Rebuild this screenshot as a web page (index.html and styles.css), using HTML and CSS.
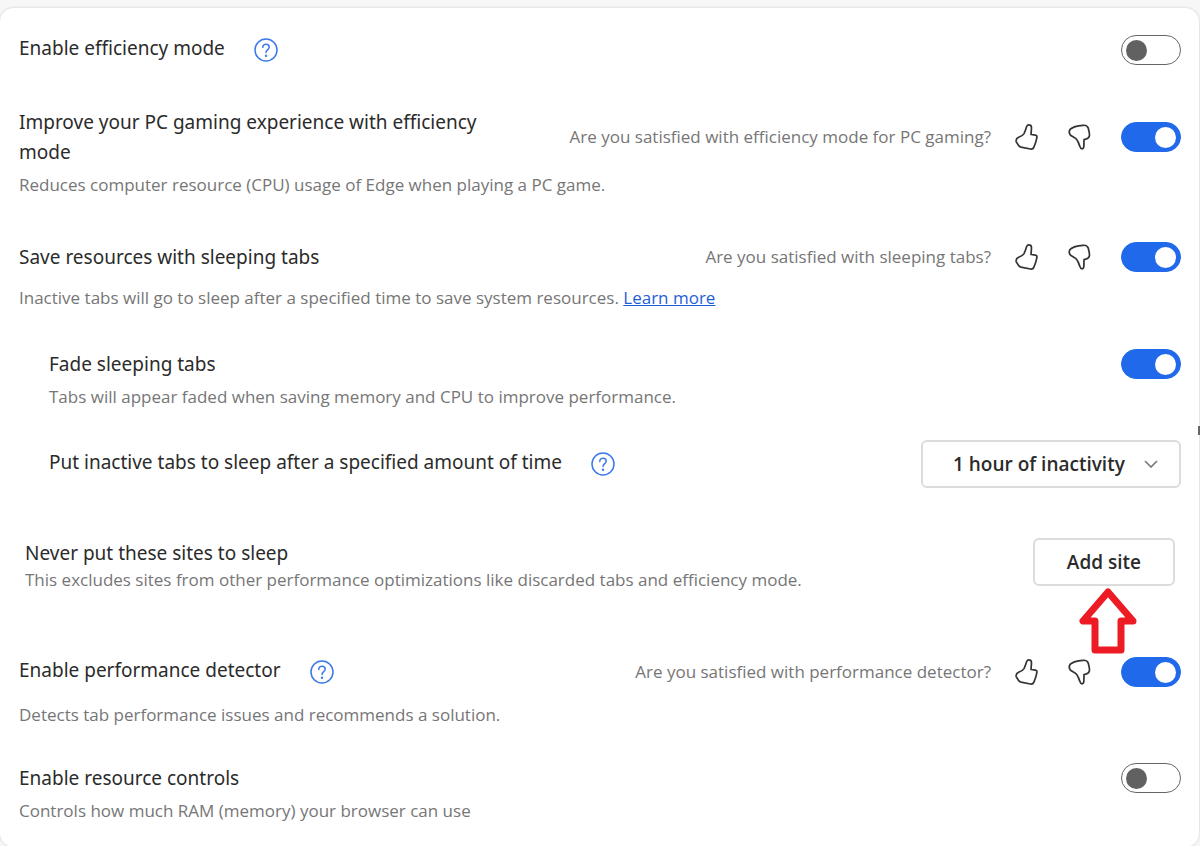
FILE: index.html
```
<!DOCTYPE html>
<html lang="en">
<head>
    <meta charset="UTF-8">
    <meta name="viewport" content="width=device-width, initial-scale=1.0">
    <title>Settings - System and performance</title>
    <link rel="stylesheet" href="styles.css">
</head>
<body>

    <!-- Shared icons -->
    <svg class="icon-defs" aria-hidden="true">
        <symbol id="help" viewBox="0 0 24 24">
            <circle cx="12" cy="12" r="11"/>
            <path d="M8.8 9.4C8.8 7.4 10.1 6.2 12 6.2s3.2 1.2 3.2 3c0 2.4-3.2 2.6-3.2 5.4"/>
            <circle cx="12" cy="17.8" r=".5"/>
        </symbol>
        <symbol id="thumb-up" viewBox="0 0 26 26">
            <path d="M13.6 2.8C14.2 1.2 15 .8 16 .9c1.6.1 2.5 1.4 2.5 3L18 10.5l4.4.6c1.2.2 1.7 1 1.5 2.2-.5 3.2-1.500 6.400-3 9.800-.6 1.500-1.900 2.200-3.500 1.900L8 23.100c-1.500-.4-2.300-1.100-3-2.500-.7-1.300-1.700-2-1.900-3.400-.2-1.900.9-3.300 3-4.200 2.100-.8 3.800-1.600 4.900-3.400 1.100-2 1.800-4.600 2.600-6.800z"/>
        </symbol>
        <symbol id="thumb-down" viewBox="0 0 26 26">
            <path d="M2.4 9.2C1.9 7.2 2.5 5.6 4.2 4.5 6.5 2.9 8.5 2.3 11.5 1.8l4.5-.5c2.7-.2 4.6.6 5.3 3 .6 2.200 1.300 4.700 1.200 7-.1 1.900-1.200 3-3 3.600l-2.500.7-.1 6.400c-.1 1.600-.8 2.800-1.900 2.800-1.200 0-1.700-1-2.100-2.200-.9-2.700-1.600-5.100-3.200-7.100-1.300-1.600-2.700-2.200-4.500-3.200-1.500-.8-2.400-1.500-2.800-3.100z"/>
        </symbol>
    </svg>

    <main class="card">

        <section class="row">
            <div class="row-head">
                <div class="title-group">
                    <label class="title" for="efficiency">Enable efficiency mode</label>
                    <button type="button" class="help-btn" aria-label="Help with efficiency mode"><svg><use href="#help"/></svg></button>
                </div>
                <input type="checkbox" role="switch" class="toggle" id="efficiency">
            </div>
        </section>

        <section class="row row-gaming">
            <div class="row-head">
                <label class="title" for="gaming">Improve your PC gaming experience with efficiency mode</label>
                <div class="feedback">
                    <span>Are you satisfied with efficiency mode for PC gaming?</span>
                    <button type="button" class="thumb" aria-label="Yes"><svg><use href="#thumb-up"/></svg></button>
                    <button type="button" class="thumb" aria-label="No"><svg><use href="#thumb-down"/></svg></button>
                </div>
                <input type="checkbox" role="switch" class="toggle" id="gaming" checked>
            </div>
            <p class="desc">Reduces computer resource (CPU) usage of Edge when playing a PC game.</p>
        </section>

        <section class="row row-sleeping">
            <div class="row-head">
                <label class="title" for="sleeping">Save resources with sleeping tabs</label>
                <div class="feedback">
                    <span>Are you satisfied with sleeping tabs?</span>
                    <button type="button" class="thumb" aria-label="Yes"><svg><use href="#thumb-up"/></svg></button>
                    <button type="button" class="thumb" aria-label="No"><svg><use href="#thumb-down"/></svg></button>
                </div>
                <input type="checkbox" role="switch" class="toggle" id="sleeping" checked>
            </div>
            <p class="desc desc-loose">Inactive tabs will go to sleep after a specified time to save system resources. <a href="#">Learn more</a></p>
        </section>

        <section class="row row-fade sub">
            <div class="row-head">
                <label class="title" for="fade">Fade sleeping tabs</label>
                <input type="checkbox" role="switch" class="toggle" id="fade" checked>
            </div>
            <p class="desc">Tabs will appear faded when saving memory and CPU to improve performance.</p>
        </section>

        <section class="row row-timeout sub">
            <div class="row-head">
                <div class="title-group">
                    <label class="title" for="timeout">Put inactive tabs to sleep after a specified amount of time</label>
                    <button type="button" class="help-btn" aria-label="Help with sleep time"><svg><use href="#help"/></svg></button>
                </div>
                <div class="select-wrap">
                    <select id="timeout">
                        <option>1 hour of inactivity</option>
                        <option>2 hours of inactivity</option>
                        <option>6 hours of inactivity</option>
                    </select>
                    <svg class="chevron" viewBox="0 0 14 8"><path d="M1 1l6 6 6-6"/></svg>
                </div>
            </div>
        </section>

        <section class="row row-sites">
            <div class="sites-text">
                <h2 class="title">Never put these sites to sleep</h2>
                <p class="desc">This excludes sites from other performance optimizations like discarded tabs and efficiency mode.</p>
            </div>
            <div class="add-wrap">
                <button type="button" class="add-btn">Add site</button>
                <svg class="arrow" viewBox="0 0 58 68"><path d="M29 6L4 35h12v29h26V35h12z"/></svg>
            </div>
        </section>

        <section class="row row-detector">
            <div class="row-head">
                <div class="title-group">
                    <label class="title" for="detector">Enable performance detector</label>
                    <button type="button" class="help-btn" aria-label="Help with performance detector"><svg><use href="#help"/></svg></button>
                </div>
                <div class="feedback">
                    <span>Are you satisfied with performance detector?</span>
                    <button type="button" class="thumb" aria-label="Yes"><svg><use href="#thumb-up"/></svg></button>
                    <button type="button" class="thumb" aria-label="No"><svg><use href="#thumb-down"/></svg></button>
                </div>
                <input type="checkbox" role="switch" class="toggle" id="detector" checked>
            </div>
            <p class="desc desc-loose">Detects tab performance issues and recommends a solution.</p>
        </section>

        <section class="row row-controls">
            <div class="row-head">
                <label class="title" for="controls">Enable resource controls</label>
                <input type="checkbox" role="switch" class="toggle" id="controls">
            </div>
            <p class="desc">Controls how much RAM (memory) your browser can use</p>
        </section>

    </main>

    <div class="edge-mark"></div>

</body>
</html>
```
FILE: styles.css
```
* {
  box-sizing: border-box;
}

body {
  margin: 0;
  padding-top: 8px;
  background-color: #f7f7f7;
  color: #2b2b2b;
  font-family: "Open Sans", "Noto Sans", sans-serif;
}

.icon-defs {
  display: none;
}

.card {
  margin-right: 1px;
  padding: 25px 18px 24px 19px;
  background-color: #fff;
  border-radius: 14px;
  box-shadow: 0 0 3px rgba(0, 0, 0, 0.18);
}

.row-head {
  display: flex;
  align-items: center;
  min-height: 30px;
}

.row-gaming {
  margin-top: 40px;
}

.row-sleeping {
  margin-top: 45px;
}

.row-fade {
  margin-top: 39px;
}

.row-timeout {
  margin-top: 31px;
}

.row-sites {
  display: flex;
  align-items: flex-start;
  justify-content: space-between;
  margin-top: 50px;
  padding: 0 6px;
}

.row-detector {
  margin-top: 63px;
}

.row-controls {
  margin-top: 36px;
}

.sub {
  padding-left: 30px;
}

.title {
  flex: 1;
  margin: 0;
  font-family: "Noto Sans", sans-serif;
  font-size: 19px;
  font-weight: 400;
  line-height: 30px;
}

.title-group {
  display: flex;
  flex: 1;
  align-items: center;
  gap: 29px;
}

.title-group .title {
  flex: none;
  padding-bottom: 4px;
}

.desc {
  margin: 6px 0 0;
  color: #767676;
  font-size: 17px;
  line-height: 24px;
}

.desc-loose {
  margin-top: 14px;
}

.sites-text .desc {
  margin-top: 0;
}

.desc a {
  color: #1f5fd6;
}

.help-btn,
.thumb {
  padding: 0;
  border: none;
  background: none;
  cursor: pointer;
}

.help-btn svg {
  display: block;
  width: 24px;
  height: 24px;
  fill: none;
  stroke: #3b78ec;
  stroke-width: 1.5;
  stroke-linecap: round;
}

.feedback {
  display: flex;
  align-items: center;
  margin-left: 48px;
  color: #767676;
  font-size: 17px;
  line-height: 24px;
}

.thumb {
  margin-right: 28px;
}

.feedback span {
  margin-right: 22px;
}

.thumb svg {
  display: block;
  width: 26px;
  height: 26px;
  fill: none;
  stroke: #333;
  stroke-width: 1.7;
  stroke-linejoin: round;
}

.toggle {
  appearance: none;
  display: flex;
  flex: none;
  align-items: center;
  width: 60px;
  height: 30px;
  margin: 0;
  padding: 0 4px;
  border: 1px solid #666;
  border-radius: 15px;
  background-color: #fff;
  cursor: pointer;
}

.toggle::before {
  content: '';
  width: 21px;
  height: 21px;
  border-radius: 50%;
  background-color: #616161;
}

.toggle:checked {
  justify-content: flex-end;
  border-color: #2169eb;
  background-color: #2169eb;
}

.toggle:checked::before {
  background-color: #fff;
}

.select-wrap,
.add-wrap {
  position: relative;
  flex: none;
}

.select-wrap select,
.add-btn {
  height: 48px;
  border: 2px solid #dcdcdc;
  border-radius: 6px;
  background-color: #fff;
  color: #2b2b2b;
  font-family: inherit;
  font-size: 19px;
  font-weight: 600;
  cursor: pointer;
}

.select-wrap select {
  appearance: none;
  width: 260px;
  padding: 0 48px 0 30px;
}

.chevron {
  position: absolute;
  top: 20px;
  right: 23px;
  width: 14px;
  height: 8px;
  fill: none;
  stroke: #777;
  stroke-width: 1.6;
  pointer-events: none;
}

.add-btn {
  padding: 0 32px;
}

/* red pointer under the Add site button */
.arrow {
  position: absolute;
  top: 48px;
  left: 46px;
  width: 58px;
  height: 68px;
  fill: #fff;
  stroke: #ed1c24;
  stroke-width: 7;
  stroke-linejoin: round;
}

.edge-mark {
  position: absolute;
  top: 426px;
  right: 0;
  width: 2px;
  height: 9px;
  background-color: #666;
}
```
